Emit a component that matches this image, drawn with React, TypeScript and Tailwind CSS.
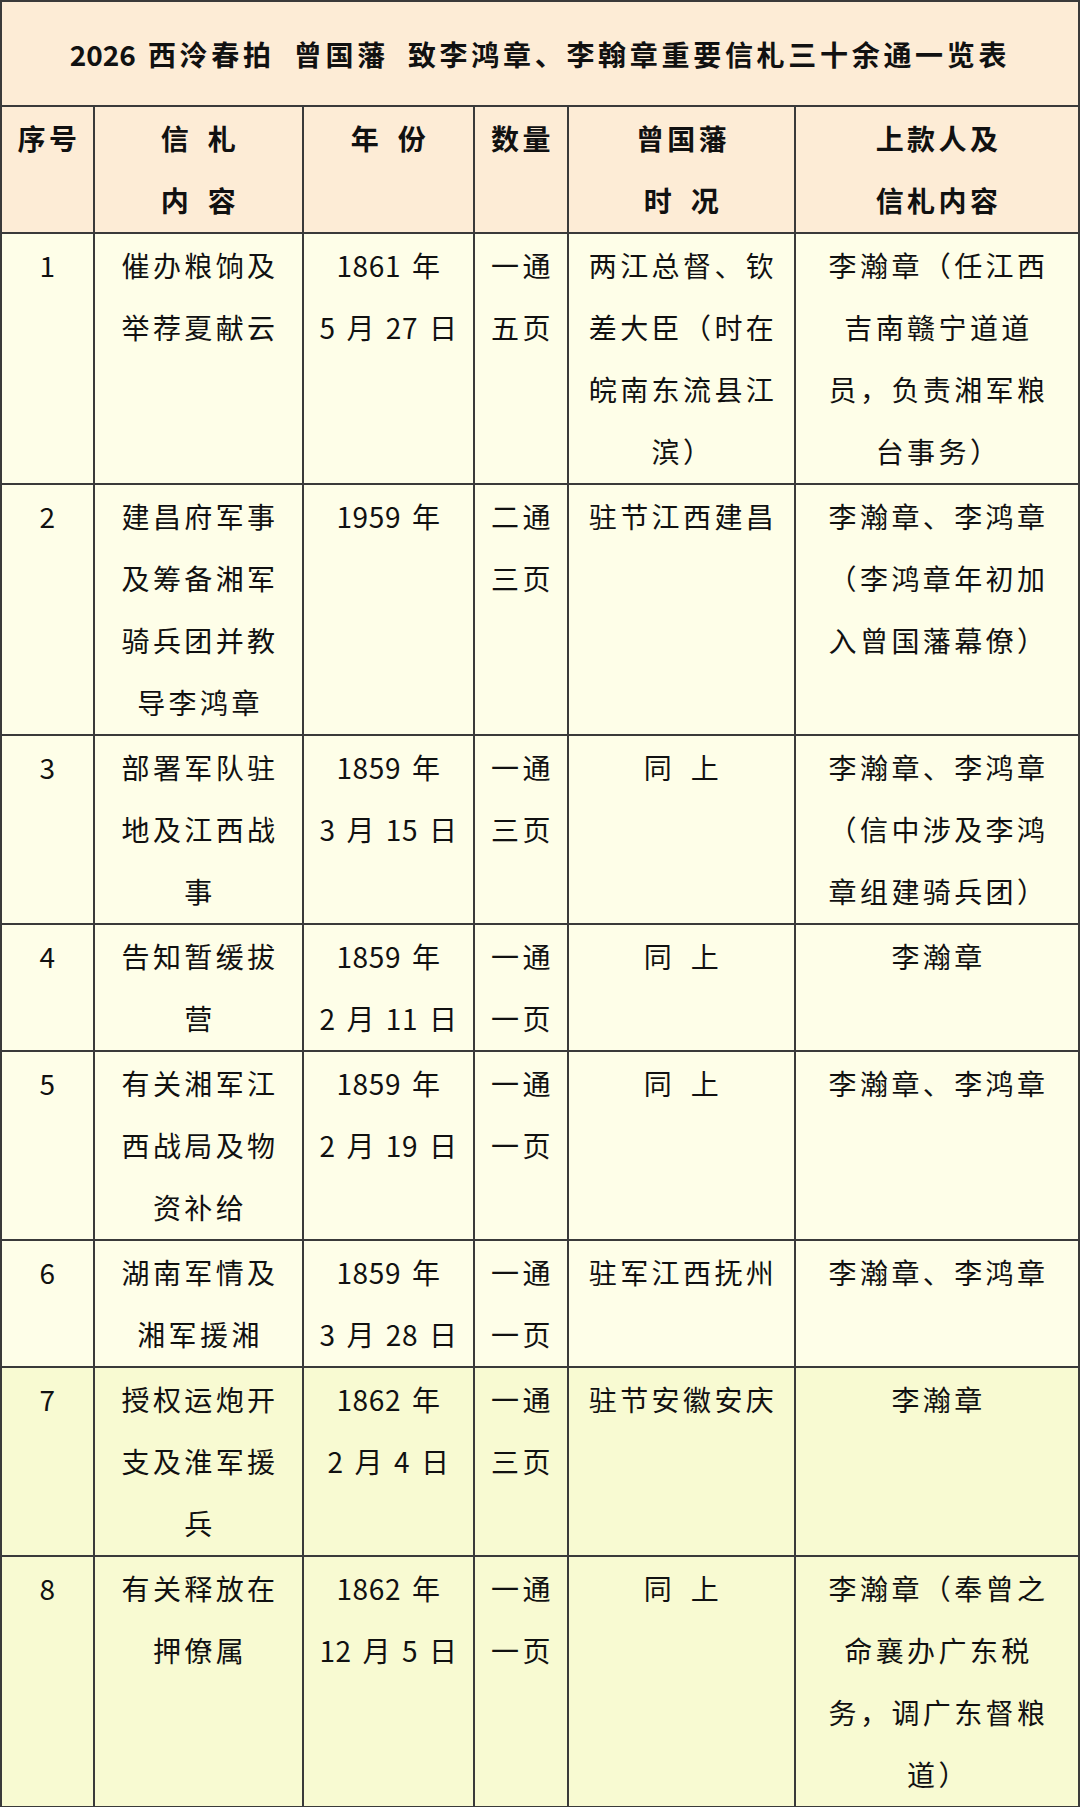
import React from 'react';

type Tone = 'cream' | 'lime';

interface LetterRow {
  no: string;
  content: string[];
  date: string[];
  qty: string[];
  status: string[];
  recipient: string[];
  tone: Tone;
}

const ROWS: LetterRow[] = [
  {
    no: '1',
    content: ['催办粮饷及', '举荐夏献云'],
    date: ['1861 年', '5 月 27 日'],
    qty: ['一通', '五页'],
    status: ['两江总督、钦', '差大臣（时在', '皖南东流县江', '滨）'],
    recipient: ['李瀚章（任江西', '吉南赣宁道道', '员，负责湘军粮', '台事务）'],
    tone: 'cream',
  },
  {
    no: '2',
    content: ['建昌府军事', '及筹备湘军', '骑兵团并教', '导李鸿章'],
    date: ['1959 年'],
    qty: ['二通', '三页'],
    status: ['驻节江西建昌'],
    recipient: ['李瀚章、李鸿章', '（李鸿章年初加', '入曾国藩幕僚）'],
    tone: 'cream',
  },
  {
    no: '3',
    content: ['部署军队驻', '地及江西战', '事'],
    date: ['1859 年', '3 月 15 日'],
    qty: ['一通', '三页'],
    status: ['同 上'],
    recipient: ['李瀚章、李鸿章', '（信中涉及李鸿', '章组建骑兵团）'],
    tone: 'cream',
  },
  {
    no: '4',
    content: ['告知暂缓拔', '营'],
    date: ['1859 年', '2 月 11 日'],
    qty: ['一通', '一页'],
    status: ['同 上'],
    recipient: ['李瀚章'],
    tone: 'cream',
  },
  {
    no: '5',
    content: ['有关湘军江', '西战局及物', '资补给'],
    date: ['1859 年', '2 月 19 日'],
    qty: ['一通', '一页'],
    status: ['同 上'],
    recipient: ['李瀚章、李鸿章'],
    tone: 'cream',
  },
  {
    no: '6',
    content: ['湖南军情及', '湘军援湘'],
    date: ['1859 年', '3 月 28 日'],
    qty: ['一通', '一页'],
    status: ['驻军江西抚州'],
    recipient: ['李瀚章、李鸿章'],
    tone: 'cream',
  },
  {
    no: '7',
    content: ['授权运炮开', '支及淮军援', '兵'],
    date: ['1862 年', '2 月 4 日'],
    qty: ['一通', '三页'],
    status: ['驻节安徽安庆'],
    recipient: ['李瀚章'],
    tone: 'lime',
  },
  {
    no: '8',
    content: ['有关释放在', '押僚属'],
    date: ['1862 年', '12 月 5 日'],
    qty: ['一通', '一页'],
    status: ['同 上'],
    recipient: ['李瀚章（奉曾之', '命襄办广东税', '务，调广东督粮', '道）'],
    tone: 'lime',
  },
];

const GRID = 'grid grid-cols-[93px_209px_171px_94px_227px_284px]';

function Cell({
  lines,
  bg,
  kind = 'text',
}: {
  lines: string[];
  bg: string;
  kind?: 'text' | 'date' | 'head';
}) {
  const spacing =
    kind === 'date'
      ? 'tracking-[0.6px] [word-spacing:4px]'
      : kind === 'head'
        ? 'font-semibold tracking-[3.4px] pl-[3px] [word-spacing:6px]'
        : 'tracking-[3.4px] pl-[3px] [word-spacing:6px]';
  return (
    <div className={`${bg} border-r-2 border-b-2 border-[#3a3a3a] pb-px text-center leading-[62px] ${spacing}`}>
      {lines.map((l, i) => (
        <div key={i} className="whitespace-nowrap">
          {l}
        </div>
      ))}
    </div>
  );
}

export default function App() {
  const head = 'bg-[#fdecd6]';

  return (
    <div
      className="w-[1080px] border-t-2 border-l-2 border-[#3a3a3a] bg-[#fefee8] text-[28px] text-[#111]"
      style={{ fontFamily: '"Noto Sans CJK SC", "Noto Sans", sans-serif' }}
    >
      {/* Title */}
      <div className={`${head} h-[105px] border-r-2 border-b-2 border-[#3a3a3a] flex items-center justify-center font-bold tracking-[3.7px] [word-spacing:9px] whitespace-nowrap`}>
        <span className="tracking-normal mr-[12px]">2026</span>
        <span>西泠春拍 曾国藩 致李鸿章、李翰章重要信札三十余通一览表</span>
      </div>

      {/* Column headers */}
      <div className={GRID}>
        <Cell kind="head" bg={head} lines={['序号']} />
        <Cell kind="head" bg={head} lines={['信 札', '内 容']} />
        <Cell kind="head" bg={head} lines={['年 份']} />
        <Cell kind="head" bg={head} lines={['数量']} />
        <Cell kind="head" bg={head} lines={['曾国藩', '时 况']} />
        <Cell kind="head" bg={head} lines={['上款人及', '信札内容']} />
      </div>

      {/* Letters */}
      {ROWS.map((r) => {
        const bg = r.tone === 'lime' ? 'bg-[#f8fad2]' : 'bg-[#fefee8]';
        return (
          <div key={r.no} className={GRID}>
            <Cell kind="date" bg={bg} lines={[r.no]} />
            <Cell bg={bg} lines={r.content} />
            <Cell kind="date" bg={bg} lines={r.date} />
            <Cell bg={bg} lines={r.qty} />
            <Cell bg={bg} lines={r.status} />
            <Cell bg={bg} lines={r.recipient} />
          </div>
        );
      })}
    </div>
  );
}
